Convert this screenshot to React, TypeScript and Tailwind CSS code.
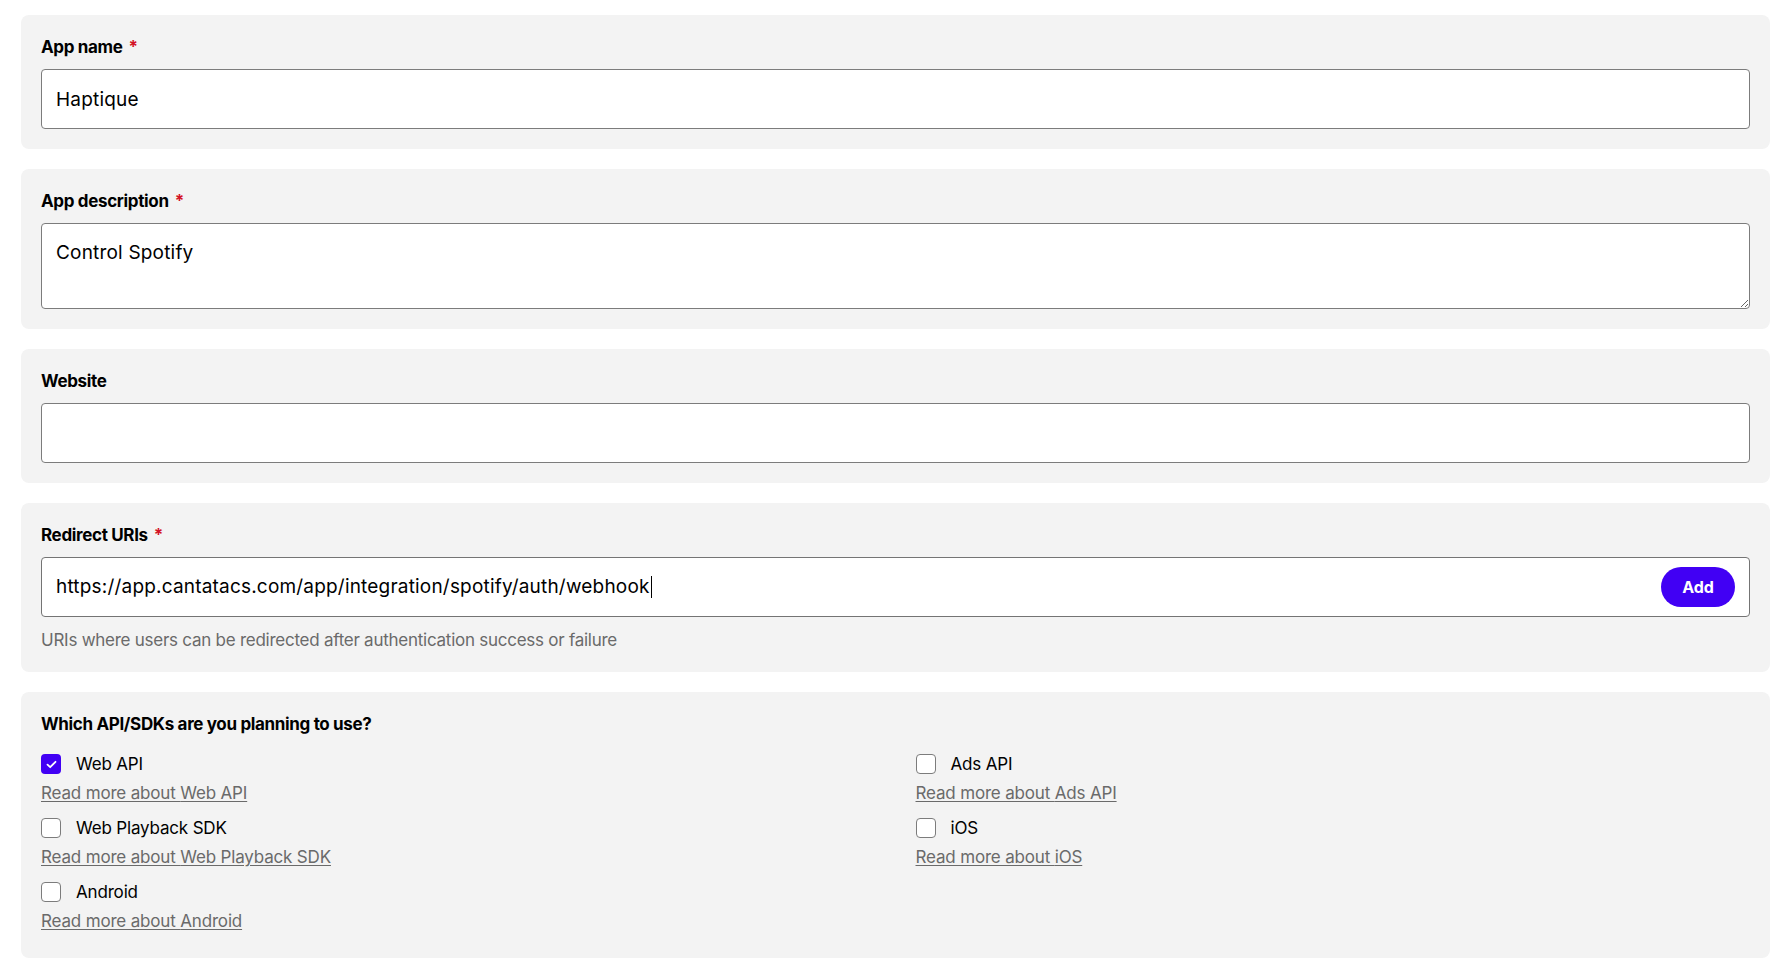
import { ReactNode } from "react"

const apis = [
  { left: { name: "Web API", checked: true }, right: { name: "Ads API", checked: false } },
  { left: { name: "Web Playback SDK", checked: false }, right: { name: "iOS", checked: false } },
  { left: { name: "Android", checked: false }, right: null },
]

function Card({ children }: { children: ReactNode }) {
  return <div className="rounded-lg bg-[#f3f3f3] p-5">{children}</div>
}

function Label({ text, required }: { text: string; required?: boolean }) {
  return (
    <div className="mb-[10px] text-[17px] font-bold leading-6 tracking-[-0.02em] text-black">
      {text}
      {required && <span className="ml-[6px] text-[#d31225]">*</span>}
    </div>
  )
}

function Checkbox({ checked }: { checked: boolean }) {
  if (checked) {
    return (
      <span className="flex h-5 w-5 items-center justify-center rounded-[4px] bg-[#4100f4]">
        <svg width="11" height="9" viewBox="0 0 11 9" fill="none">
          <path d="M1.5 4.6L4.2 7.2L9.5 1.8" stroke="white" strokeWidth="1.8" strokeLinecap="round" strokeLinejoin="round" />
        </svg>
      </span>
    )
  }
  return <span className="h-5 w-5 rounded-[4px] border border-[#7c7c7c] bg-white" />
}

function ApiOption({ name, checked }: { name: string; checked: boolean }) {
  return (
    <div className="flex flex-col gap-[5px]">
      <label className="flex h-6 items-center gap-[15px]">
        <Checkbox checked={checked} />
        <span className="text-[17px] leading-6 tracking-[-0.01em] text-black">{name}</span>
      </label>
      <a href="#" className="w-fit text-[17px] leading-6 tracking-[-0.01em] text-[#6a6a6a] underline underline-offset-2">
        Read more about {name}
      </a>
    </div>
  )
}

export default function App() {
  return (
    <div className="min-h-screen bg-white pl-[21px] pr-[19px] pt-[15px] pb-4 font-['Inter',sans-serif] text-black">
      <div className="flex flex-col gap-5">
        <Card>
          <Label text="App name" required />
          <input
            readOnly
            value="Haptique"
            className="h-[60px] w-full rounded-[4px] border border-[#7c7c7c] bg-white px-[14px] text-[19px] tracking-[0.01em] text-black outline-none"
          />
        </Card>

        <Card>
          <Label text="App description" required />
          <textarea
            readOnly
            value="Control Spotify"
            className="block h-[86px] w-full rounded-[4px] border border-[#7c7c7c] bg-white px-[14px] pt-[17px] text-[19px] leading-6 tracking-[0.01em] text-black outline-none"
          />
        </Card>

        <Card>
          <Label text="Website" />
          <input readOnly value="" className="h-[60px] w-full rounded-[4px] border border-[#7c7c7c] bg-white px-[14px] text-[19px] outline-none" />
        </Card>

        <Card>
          <Label text="Redirect URIs" required />
          <div className="flex h-[60px] w-full items-center justify-between rounded-[4px] border border-[#747474] bg-white pl-[14px] pr-[14px]">
            <div className="flex items-center text-[19px] tracking-[0.01em] text-black">
              https://app.cantatacs.com/app/integration/spotify/auth/webhook
              <span className="ml-px h-[22px] w-px bg-black" />
            </div>
            <button className="h-10 w-[74px] rounded-full bg-[#4100f4] text-[16px] font-bold tracking-[-0.01em] text-white">Add</button>
          </div>
          <p className="mt-[11px] text-[17px] leading-6 tracking-[-0.015em] text-[#6a6a6a]">
            URIs where users can be redirected after authentication success or failure
          </p>
        </Card>

        <Card>
          <div className="mb-4 text-[17px] font-bold leading-6 tracking-[-0.02em] text-black">Which API/SDKs are you planning to use?</div>
          <div className="grid grid-cols-2 gap-x-10 gap-y-[11px] pb-[5px]">
            {apis.map((row) => (
              <div key={row.left.name} className="contents">
                <ApiOption name={row.left.name} checked={row.left.checked} />
                {row.right ? <ApiOption name={row.right.name} checked={row.right.checked} /> : <div />}
              </div>
            ))}
          </div>
        </Card>
      </div>
    </div>
  )
}
